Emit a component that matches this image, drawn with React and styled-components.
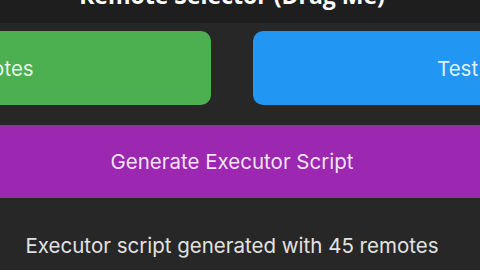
import React from 'react';
import styled, {createGlobalStyle} from 'styled-components';

const GlobalStyle = createGlobalStyle`
html, body {
  margin: 0;
  padding: 0;
  background: #272727;
  overflow: hidden;
}
body {
  font-family: Inter, "Noto Sans", sans-serif;
}
`

const Panel = styled.div`
width: 960px;
margin-left: -248px;
background: #272727;
min-height: 270px;
`

const Header = styled.div`
height: 23px;
background: #1e1e1e;
display: flex;
justify-content: center;
align-items: flex-end;
padding-bottom: 18px;
box-sizing: border-box;
`

const Title = styled.h1`
margin: 0;
font-family: "Open Sans", sans-serif;
font-size: 23px;
line-height: 20px;
font-weight: 700;
color: #ffffff;
white-space: nowrap;
`

const Body = styled.div`
padding: 8px 20px 0;
display: flex;
flex-direction: column;
gap: 20px;
`

const Row = styled.div`
display: grid;
grid-template-columns: 1fr 1fr;
gap: 42px;
`

const Button = styled.button`
height: ${p => p.$tall || 74}px;
border: none;
border-radius: 10px;
background: ${p => p.$bg};
color: rgba(255, 255, 255, 0.88);
font-family: Inter, "Noto Sans", sans-serif;
font-size: 20.5px;
display: flex;
align-items: center;
justify-content: center;
white-space: nowrap;
cursor: pointer;
`

const Status = styled.div`
margin-top: 16px;
text-align: center;
font-size: 20.5px;
line-height: 24px;
color: #e2e2e2;
white-space: nowrap;
`

export default function App() {
  return (
    <>
      <GlobalStyle/>
      <Panel>
        <Header>
          <Title>Remote Selector (Drag Me)</Title>
        </Header>
        <Body>
          <Row>
            <Button $bg="#4caf50">Remotes</Button>
            <Button $bg="#2196f3">Test All</Button>
          </Row>
          <Button $bg="#9c27b0" $tall={73}>Generate Executor Script</Button>
          <Status>Executor script generated with 45 remotes</Status>
        </Body>
      </Panel>
    </>
  );
}
